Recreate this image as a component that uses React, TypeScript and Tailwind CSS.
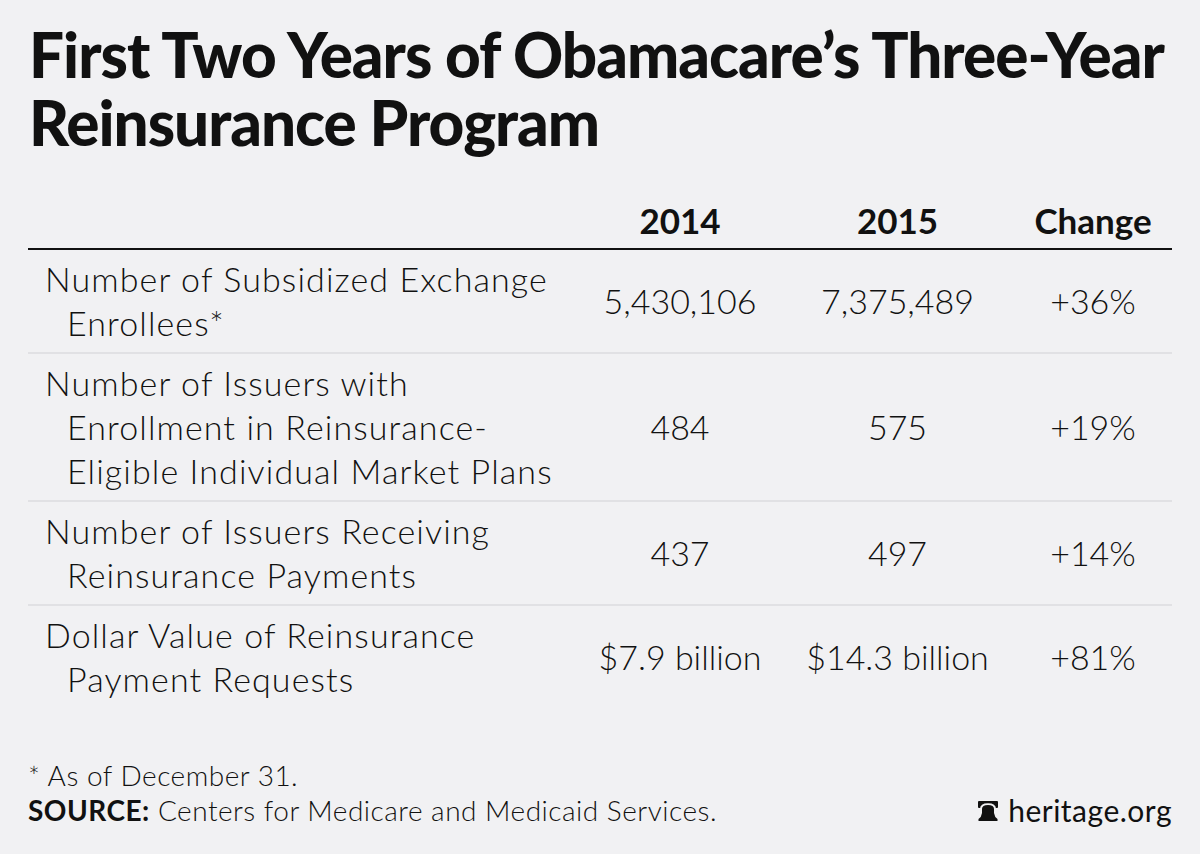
const rows = [
  { label: ["Number of Subsidized Exchange", "Enrollees*"], a: "5,430,106", b: "7,375,489", c: "+36%" },
  {
    label: ["Number of Issuers with", "Enrollment in Reinsurance-", "Eligible Individual Market Plans"],
    a: "484",
    b: "575",
    c: "+19%",
  },
  { label: ["Number of Issuers Receiving", "Reinsurance Payments"], a: "437", b: "497", c: "+14%" },
  { label: ["Dollar Value of Reinsurance", "Payment Requests"], a: "$7.9 billion", b: "$14.3 billion", c: "+81%" },
];

// heritage liberty bell mark
const Bell = () => (
  <svg width="20" height="20" viewBox="0 0 20 20" className="mr-[10px] mb-[7px] shrink-0">
    <rect x="0" y="0" width="20" height="7" rx="1" fill="#111" />
    <path d="M2 8 Q2 2.3 10 2.3 Q18 2.3 18 8 Z" fill="#f1f1f3" />
    <path d="M4 8 Q4 4 10 4 Q16 4 16 8 L16 12 Q16.5 16 19.5 18 L19.5 20 L0.5 20 L0.5 18 Q3.5 16 4 12 Z" fill="#111" />
  </svg>
);

export default function App() {
  return (
    <div className="w-[1200px] h-[854px] bg-[#f1f1f3] text-[#111] font-['Lato',sans-serif] flex flex-col">
      <h1 className="pl-[29px] pt-[20px] text-[62px] leading-[68px] font-black tracking-[-1px] whitespace-nowrap">
        First Two Years of Obamacare’s Three-Year
        <br />
        Reinsurance Program
      </h1>

      <div className="mx-[28px] mt-[44px]">
        <div className="grid grid-cols-[547px_210px_225px_166px] border-b-2 border-[#111] pb-[8px] text-[35px] leading-[40px] font-bold">
          <div />
          <div className="text-center">2014</div>
          <div className="text-center">2015</div>
          <div className="text-center">Change</div>
        </div>
        {rows.map((r, i) => (
          <div
            key={i}
            className={
              "grid grid-cols-[547px_210px_225px_166px] items-center py-[7px] text-[34px] leading-[44px] font-light " +
              (i < rows.length - 1 ? "border-b-2 border-[#e1e1e4]" : "")
            }
          >
            <div className="pl-[17px] tracking-[1.1px] whitespace-nowrap">
              {r.label.map((l, j) => (
                <div key={j} className={j > 0 ? "pl-[22px]" : ""}>
                  {l}
                </div>
              ))}
            </div>
            <div className="text-center">{r.a}</div>
            <div className="text-center">{r.b}</div>
            <div className="text-center">{r.c}</div>
          </div>
        ))}
      </div>

      <div className="mt-auto mb-[26px] px-[28px] flex items-end justify-between">
        <div className="text-[28px] leading-[35px] font-light tracking-[0.5px]">
          <div>* As of December 31.</div>
          <div>
            <span className="font-bold">SOURCE:</span> Centers for Medicare and Medicaid Services.
          </div>
        </div>
        <div className="flex items-end text-[30px] leading-[35px] font-normal tracking-[0.5px] pr-[0px]">
          <Bell />
          heritage.org
        </div>
      </div>
    </div>
  );
}
